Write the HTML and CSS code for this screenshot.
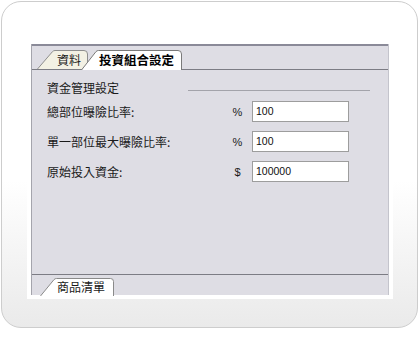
FILE: index.html
```html
<!DOCTYPE html>
<html lang="zh-Hant">
<head>
<meta charset="utf-8">
<link rel="stylesheet" href="styles.css">
</head>
<body>
<div class="frame">
  <div class="sheet">
    <div class="panel">
      <div class="topbar"></div>
      <div class="tabstrip">
        <div class="tab tab-data">
          <svg class="tab-shape" width="51" height="19" viewBox="0 0 51 19"><path d="M0.5,19 L15.5,1.6 Q16.5,0.5 18,0.5 L47,0.5 Q50.5,0.5 50.5,4 L50.5,19" fill="#f3f1e4" stroke="#8e8e8e"/></svg>
          <span class="tab-label">資料</span>
        </div>
        <div class="tab tab-active">
          <svg class="tab-shape" width="101" height="20" viewBox="0 0 101 20"><path d="M0.5,20 L15,1.6 Q16,0.5 17.5,0.5 L97,0.5 Q100.5,0.5 100.5,4 L100.5,20" fill="#ffffff" stroke="#7a7a7a"/></svg>
          <span class="tab-label">投資組合設定</span>
        </div>
      </div>
      <div class="content">
        <div class="group-head">
          <span>資金管理設定</span>
          <span class="group-line"></span>
        </div>
        <div class="form">
          <span class="label">總部位曝險比率:</span><span class="unit">%</span><div class="field">100</div>
          <span class="label">單一部位最大曝險比率:</span><span class="unit">%</span><div class="field">100</div>
          <span class="label">原始投入資金:</span><span class="unit">$</span><div class="field">100000</div>
        </div>
      </div>
      <div class="bottomstrip">
        <div class="tab tab-bottom">
          <svg class="tab-shape" width="74" height="18" viewBox="0 0 74 18"><path d="M0.5,18 L14,1.6 Q15,0.5 16.5,0.5 L70.5,0.5 Q73.5,0.5 73.5,3.5 L73.5,18" fill="#ffffff" stroke="#8a8a8a"/></svg>
          <span class="tab-label">商品清單</span>
        </div>
      </div>
    </div>
  </div>
</div>
</body>
</html>
```

FILE: styles.css
```css
html, body {
  margin: 0;
  padding: 0;
  background: #ffffff;
}
body {
  width: 420px;
  height: 342px;
  font-family: "Noto Sans CJK TC", "Noto Sans CJK SC", sans-serif;
  font-size: 12px;
  color: #1a1a1a;
}
.frame {
  margin: 1px 0 0 1px;
  width: 417px;
  height: 327px;
  box-sizing: border-box;
  border: 1px solid #cdcdcd;
  border-radius: 20px;
  background: linear-gradient(to bottom, #ffffff 0%, #ffffff 55%, #eaeaea 100%);
  padding: 38px 0 0 25px;
}
.sheet {
  width: 366px;
  height: 259px;
  box-sizing: border-box;
  padding: 4px 4px 0 4px;
  background: #ffffff;
}
.panel {
  width: 358px;
  height: 251px;
  box-sizing: border-box;
  border-left: 1px solid #a4a4ac;
  border-right: 1px solid #c4c4cc;
  background: #dedde4;
  display: flex;
  flex-direction: column;
}
.topbar {
  height: 2px;
  background: #8a8a98;
}
.tabstrip {
  height: 23px;
  border-bottom: 1px solid #7c7c84;
  display: flex;
  align-items: flex-end;
  padding-left: 5px;
}
.tab {
  position: relative;
  box-sizing: border-box;
}
.tab-shape {
  position: absolute;
  left: 0;
  top: 0;
  display: block;
}
.tab-label {
  position: relative;
  display: block;
  white-space: nowrap;
}
.tab-data {
  width: 51px;
  height: 19px;
  padding-left: 20px;
  line-height: 19px;
}
.tab-active {
  width: 101px;
  height: 20px;
  margin-left: -7px;
  margin-bottom: -1px;
  padding-left: 18px;
  line-height: 20px;
  font-weight: bold;
  font-size: 12.5px;
  color: #000;
}
.content {
  flex: 1;
  padding: 10px 18px 0 15px;
}
.group-head {
  display: flex;
  align-items: center;
  justify-content: space-between;
  height: 16px;
  line-height: 16px;
}
.group-line {
  width: 182px;
  height: 1px;
  margin-top: 4px;
  background: #a3a3aa;
}
.form {
  margin-top: 5px;
  display: grid;
  grid-template-columns: 183px 15px 97px;
  column-gap: 0;
  row-gap: 9px;
  align-items: center;
}
.label {
  line-height: 21px;
}
.unit {
  font-family: "Liberation Sans", Arial, sans-serif;
  font-size: 11px;
  text-align: center;
}
.field {
  margin-left: 7px;
  width: 97px;
  height: 21px;
  box-sizing: border-box;
  border: 1px solid #9d9d9d;
  background: #ffffff;
  padding-left: 3px;
  font-family: "Liberation Sans", Arial, sans-serif;
  font-size: 10.5px;
  line-height: 19px;
  color: #111;
}
.bottomstrip {
  height: 21px;
  border-top: 1px solid #7c7c84;
  padding: 3px 0 0 8px;
  box-sizing: border-box;
}
.tab-bottom {
  width: 74px;
  height: 18px;
  padding-left: 17px;
  line-height: 18px;
}
```
